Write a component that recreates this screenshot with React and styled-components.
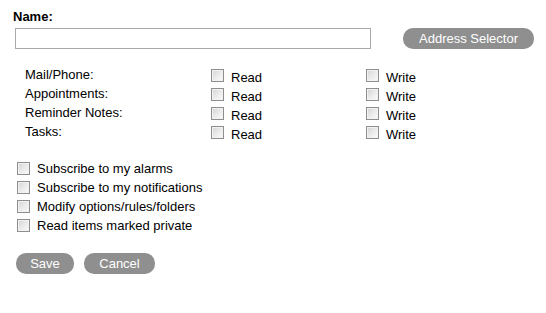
import React from "react";
import styled, { createGlobalStyle } from "styled-components";

const GlobalStyle = createGlobalStyle`
  html, body {
    margin: 0;
    padding: 0;
    background: #ffffff;
  }
  body {
    font-family: "Liberation Sans", Arial, sans-serif;
    font-size: 13px;
    color: #000000;
  }
`;

const permissions = ["Mail/Phone:", "Appointments:", "Reminder Notes:", "Tasks:"];
const options = [
  "Subscribe to my alarms",
  "Subscribe to my notifications",
  "Modify options/rules/folders",
  "Read items marked private",
];

export default function App() {
  return (
    <>
      <GlobalStyle />
      <StyledPage>
        <StyledNameLabel>Name:</StyledNameLabel>
        <StyledNameRow>
          <StyledInput type="text" />
          <StyledButton $width={131}>Address Selector</StyledButton>
        </StyledNameRow>

        <StyledPermissions>
          {permissions.map((label) => (
            <React.Fragment key={label}>
              <StyledPermLabel>{label}</StyledPermLabel>
              <StyledPermCell>
                <StyledCheckbox type="checkbox" />
                <StyledCheckText>Read</StyledCheckText>
              </StyledPermCell>
              <StyledPermCell>
                <StyledCheckbox type="checkbox" />
                <StyledCheckText>Write</StyledCheckText>
              </StyledPermCell>
            </React.Fragment>
          ))}
        </StyledPermissions>

        <StyledOptions>
          {options.map((label) => (
            <StyledOptionRow key={label}>
              <StyledCheckbox type="checkbox" $top={3} />
              <StyledCheckText $top={2}>{label}</StyledCheckText>
            </StyledOptionRow>
          ))}
        </StyledOptions>

        <StyledActions>
          <StyledButton $width={58}>Save</StyledButton>
          <StyledButton $width={71}>Cancel</StyledButton>
        </StyledActions>
      </StyledPage>
    </>
  );
}

const StyledPage = styled.div`
  display: flex;
  flex-direction: column;
  padding: 9px 0 0 13px;
  width: 546px;
  height: 313px;
  box-sizing: border-box;
`;

const StyledNameLabel = styled.label`
  font-weight: bold;
  line-height: 15px;
`;

const StyledNameRow = styled.div`
  display: flex;
  align-items: flex-start;
  gap: 32px;
  margin: 4px 0 0 2px;
`;

const StyledInput = styled.input`
  box-sizing: border-box;
  width: 356px;
  height: 21px;
  margin: 0;
  padding: 1px 3px;
  border: 1px solid #a9a9a9;
  font: inherit;
  outline: none;
`;

const StyledButton = styled.button`
  box-sizing: border-box;
  width: ${(p) => p.$width}px;
  height: 21px;
  margin: 0;
  padding: 0;
  border: none;
  border-radius: 10px;
  background: #8f8f8f;
  color: #ffffff;
  font-family: "Liberation Sans", Arial, sans-serif;
  font-size: 13px;
  line-height: 21px;
  text-align: center;
  cursor: pointer;
`;

const StyledPermissions = styled.div`
  display: grid;
  grid-template-columns: 186px 155px auto;
  grid-auto-rows: 19px;
  margin: 18px 0 0 12px;
`;

const StyledPermLabel = styled.div`
  line-height: 15px;
`;

const StyledPermCell = styled.div`
  display: flex;
  align-items: flex-start;
  gap: 7px;
`;

const StyledCheckbox = styled.input`
  appearance: none;
  -webkit-appearance: none;
  box-sizing: border-box;
  flex: none;
  width: 13px;
  height: 13px;
  margin: ${(p) => p.$top ?? 2}px 0 0 0;
  border: 1px solid #8e8e8e;
  background: linear-gradient(135deg, #d2d2d2 0%, #e8e8e8 45%, #fbfbfb 100%);
  box-shadow: inset 0 0 0 1px #f2f2f2;
  cursor: pointer;
`;

const StyledCheckText = styled.span`
  line-height: 15px;
  margin-top: ${(p) => p.$top ?? 3}px;
`;

const StyledOptions = styled.div`
  display: flex;
  flex-direction: column;
  margin: 16px 0 0 4px;
`;

const StyledOptionRow = styled.label`
  display: flex;
  align-items: flex-start;
  gap: 7px;
  height: 19px;
`;

const StyledActions = styled.div`
  display: flex;
  gap: 10px;
  margin: 18px 0 0 3px;
`;
